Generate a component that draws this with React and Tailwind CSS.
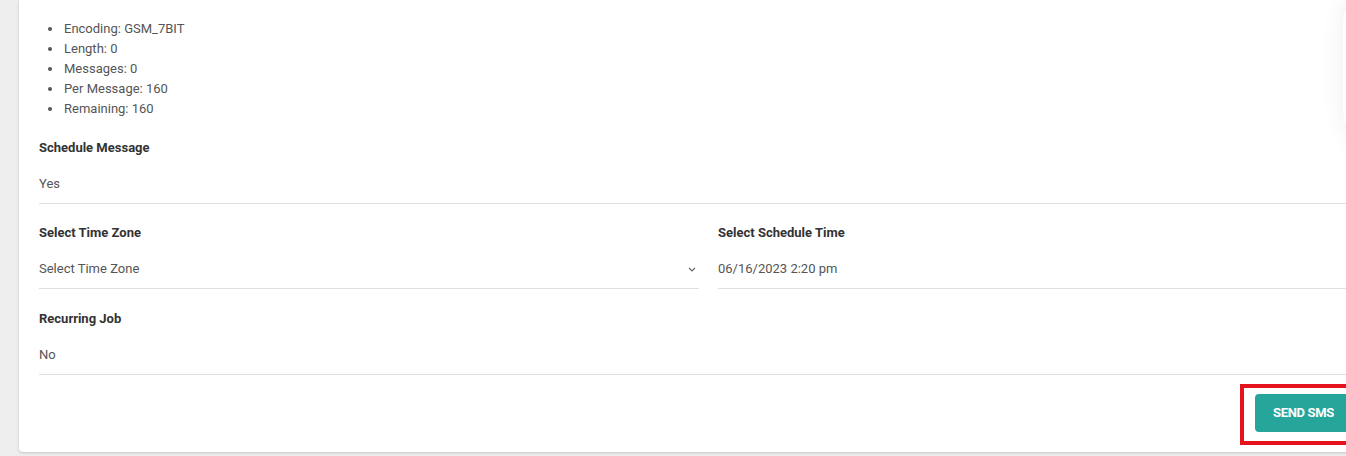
export default function App() {
  const stats = [
    'Encoding: GSM_7BIT',
    'Length: 0',
    'Messages: 0',
    'Per Message: 160',
    'Remaining: 160',
  ];

  return (
    <div
      className="relative h-[456px] w-full overflow-hidden bg-[#eeeeee] pl-[19px]"
      style={{ fontFamily: 'Roboto, "Liberation Sans", sans-serif' }}
    >
      {/* Card */}
      <div className="w-[1353px] rounded-b bg-white px-[20px] pt-[19px] pb-[20px] text-[13px] leading-5 text-[#555] shadow-[0_1px_3px_rgba(0,0,0,0.18)]">
        {/* Message stats */}
        <ul>
          {stats.map((s) => (
            <li key={s} className="flex h-5 items-center">
              <span className="flex w-[25px]">
                <span className="ml-[9px] h-[4px] w-[4px] rounded-full bg-[#555]" />
              </span>
              <span>{s}</span>
            </li>
          ))}
        </ul>

        {/* Schedule Message */}
        <div className="mt-[19px]">
          <Field label="Schedule Message" value="Yes" />
        </div>

        {/* Time zone + schedule time */}
        <div className="mt-[19px] grid grid-cols-[660px_1fr] gap-x-[19px]">
          <Field label="Select Time Zone" value="Select Time Zone" chevron />
          <Field label="Select Schedule Time" value="06/16/2023 2:20 pm" />
        </div>

        {/* Recurring Job */}
        <div className="mt-[20px]">
          <Field label="Recurring Job" value="No" />
        </div>

        {/* Submit */}
        <div className="mt-[19px] flex justify-end">
          <div className="relative">
            <button
              type="button"
              className="h-[38px] rounded bg-[#26a69a] px-[18px] text-[13px] font-bold tracking-tight text-white"
            >
              SEND SMS
            </button>
            <div className="pointer-events-none absolute -top-[10px] -bottom-[13px] -left-[15px] -right-[11px] border-[4px] border-[#e5131c]" />
          </div>
        </div>
      </div>

      {/* Floating element shadow at top right */}
      <div className="absolute top-[-20px] left-[1343px] h-[175px] w-[80px] rounded-l-[45px] bg-white shadow-[0_0_24px_rgba(0,0,0,0.07)]" />
    </div>
  );
}

function Field({ label, value, chevron }) {
  return (
    <div>
      <div className="font-bold text-[#333]">{label}</div>
      <div className="mt-4 flex items-center justify-between border-b border-[#e0e0e0] pb-[9px]">
        <span>{value}</span>
        {chevron && (
          <svg width="8" height="5" viewBox="0 0 8 5" className="mr-[3px]">
            <path d="M1 1l3 3 3-3" fill="none" stroke="#666" strokeWidth="1.2" />
          </svg>
        )}
      </div>
    </div>
  );
}
